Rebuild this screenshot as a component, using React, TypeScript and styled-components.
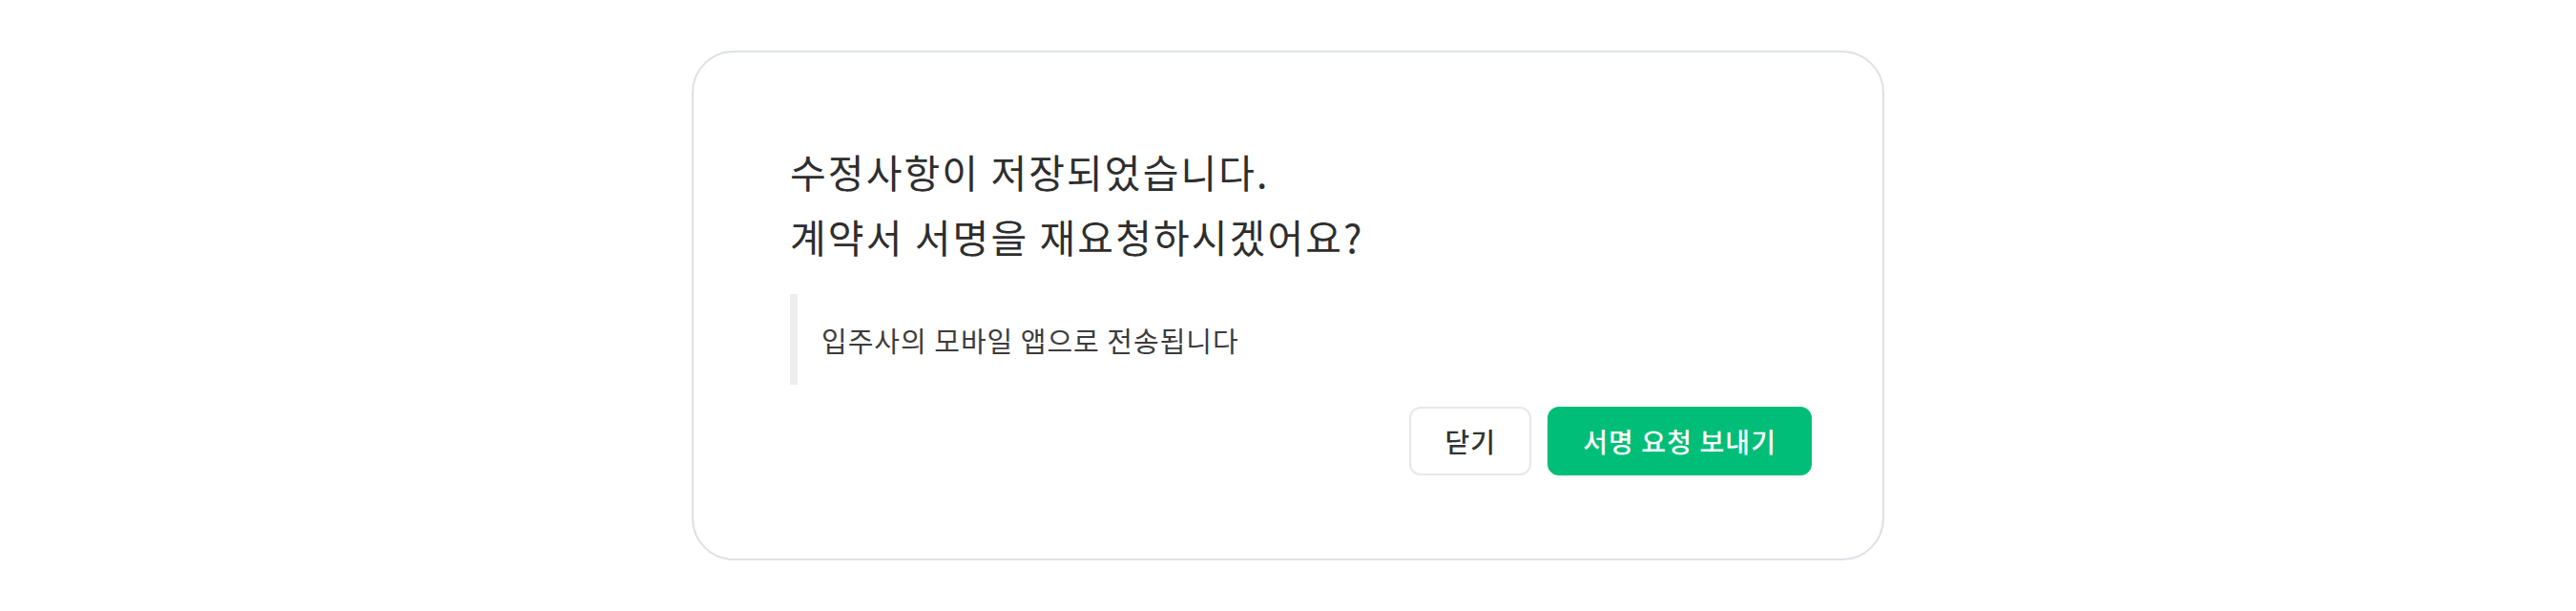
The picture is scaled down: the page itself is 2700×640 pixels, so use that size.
import React from "react";
import styled, { createGlobalStyle } from "styled-components";

const GlobalStyle = createGlobalStyle`
  html, body {
    margin: 0;
    padding: 0;
    background: #ffffff;
  }
  body {
    font-family: "Noto Sans CJK KR", "Noto Sans", sans-serif;
  }
  * { box-sizing: border-box; }
`;

const Page = styled.div`
  width: 100%;
  height: 640px;
  display: flex;
  align-items: center;
  justify-content: center;
`;

const Dialog = styled.div`
  width: 1250px;
  height: 534px;
  border: 2px solid #dde0e4;
  border-radius: 44px;
  background: #ffffff;
  padding: 90px 74px 87px 101px;
  display: flex;
  flex-direction: column;
`;

const Title = styled.h2`
  margin: 0;
  font-size: 41px;
  line-height: 68px;
  font-weight: 400;
  letter-spacing: 2.1px;
  color: #2e2e2e;
`;

const Note = styled.div`
  margin-top: 27px;
  height: 95px;
  display: flex;
  align-items: center;
  border-left: 8px solid #eeeeee;
  padding-left: 25px;
  font-size: 29px;
  color: #3c3c3c;
  letter-spacing: 1px;
`;

const Actions = styled.div`
  margin-top: 23px;
  display: flex;
  justify-content: flex-end;
  gap: 17px;
`;

const Button = styled.button<{ $primary?: boolean }>`
  height: 72px;
  padding: 0 35px;
  border-radius: 12px;
  font-family: "Noto Sans CJK KR", "Noto Sans", sans-serif;
  font-size: 28px;
  font-weight: 500;
  letter-spacing: 1.1px;
  cursor: pointer;
  border: 2px solid ${(p) => (p.$primary ? "#00be78" : "#e8e8e8")};
  background: ${(p) => (p.$primary ? "#00be78" : "#ffffff")};
  color: ${(p) => (p.$primary ? "#ffffff" : "#333333")};
`;

export default function App() {
  return (
    <>
      <GlobalStyle />
      <Page>
        <Dialog>
          <Title>
            수정사항이 저장되었습니다.
            <br />
            계약서 서명을 재요청하시겠어요?
          </Title>
          <Note>입주사의 모바일 앱으로 전송됩니다</Note>
          <Actions>
            <Button>닫기</Button>
            <Button $primary>서명 요청 보내기</Button>
          </Actions>
        </Dialog>
      </Page>
    </>
  );
}
